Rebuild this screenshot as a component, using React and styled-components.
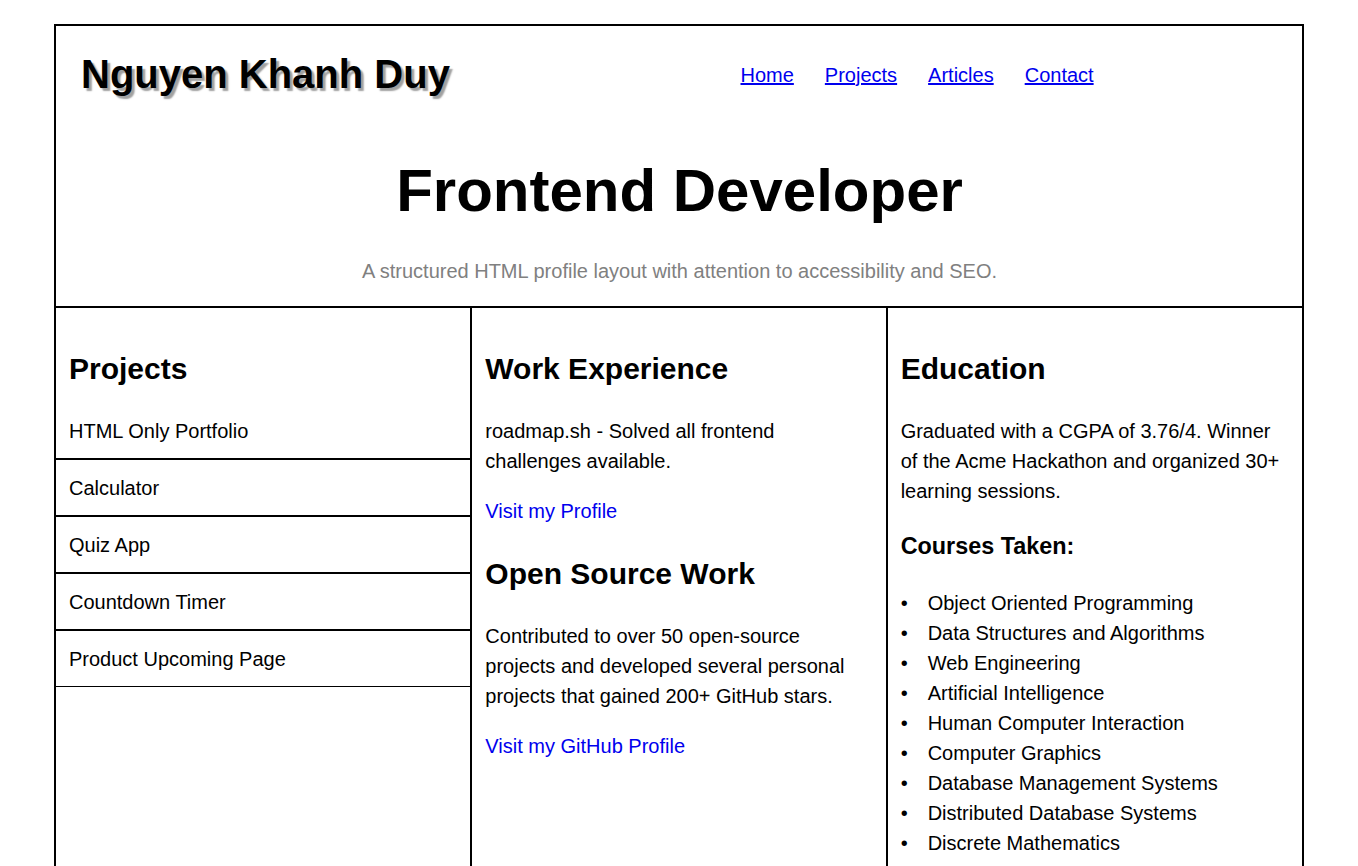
import React from "react";
import styled, { createGlobalStyle } from "styled-components";

const GlobalStyle = createGlobalStyle`
  html, body {
    margin: 0;
    padding: 0;
    background: #ffffff;
  }
  body {
    font-family: "Liberation Sans", Arial, sans-serif;
    font-size: 20px;
    line-height: 1.5;
    color: #000000;
  }
  *, *::before, *::after { box-sizing: border-box; }
`;

const Page = styled.div`
  width: 1250px;
  margin: 24px auto 0;
  border: 2px solid #000;
`;

const Header = styled.header`
  border-bottom: 2px solid #000;
  padding: 20px 24px 20px 25px;
`;

const TopRow = styled.div`
  display: grid;
  grid-template-columns: 1fr 1fr;
  align-items: center;
`;

const Name = styled.h1`
  margin: 0;
  font-size: 40px;
  line-height: 57px;
  font-weight: 700;
  text-shadow: 3px 3px 1.5px #a0a0a0;
`;

const NavList = styled.ul`
  display: flex;
  gap: 31px;
  list-style: none;
  margin: 0;
  padding: 0 0 0 61px;
`;

const NavLink = styled.a`
  color: #0000ee;
  text-decoration: underline;
  font-size: 20px;
`;

const Hero = styled.h1`
  margin: 43px 0 20px;
  text-align: center;
  font-size: 60px;
  line-height: 90px;
  font-weight: 700;
`;

const Tagline = styled.p`
  margin: 0;
  text-align: center;
  color: #808080;
  font-size: 20px;
  line-height: 30px;
`;

const Columns = styled.main`
  display: grid;
  grid-template-columns: repeat(3, 1fr);
`;

const Column = styled.section`
  border-right: 1px solid #000;
  padding: 13px 0 13px;
  & + & { border-left: 1px solid #000; }
  &:last-child { border-right: none; }
`;

const SectionTitle = styled.h2`
  margin: 25px 0;
  padding: 0 13px;
  font-size: 30px;
  line-height: 45px;
  font-weight: 700;
`;

const SubTitle = styled.h3`
  margin: 23.4px 0;
  padding: 0 13px;
  font-size: 23.4px;
  line-height: 35.1px;
  font-weight: 700;
`;

const Text = styled.p`
  margin: 20px 0;
  padding: 0 13px;
  line-height: 30px;
`;

const TextLink = styled.a`
  color: #0000ee;
  text-decoration: none;
`;

const ProjectList = styled.ul`
  list-style: none;
  margin: -13px 0 0;
  padding: 0;
`;

const ProjectItem = styled.li`
  padding: 13px 13px 12px;
  line-height: 30px;
  border-bottom: 1px solid #000;
  & + & { border-top: 1px solid #000; }
`;

const CourseList = styled.ul`
  list-style: none;
  margin: 20px 0;
  padding: 0 13px 0 40px;
  line-height: 30px;
`;

const Course = styled.li`
  &::before {
    content: "•";
    display: inline-block;
    width: 27px;
    margin-left: -27px;
  }
`;

const navItems = ["Home", "Projects", "Articles", "Contact"];
const projects = [
  "HTML Only Portfolio",
  "Calculator",
  "Quiz App",
  "Countdown Timer",
  "Product Upcoming Page",
];
const courses = [
  "Object Oriented Programming",
  "Data Structures and Algorithms",
  "Web Engineering",
  "Artificial Intelligence",
  "Human Computer Interaction",
  "Computer Graphics",
  "Database Management Systems",
  "Distributed Database Systems",
  "Discrete Mathematics",
];

export default function App() {
  return (
    <>
      <GlobalStyle />
      <Page>
        <Header>
          <TopRow>
            <Name>Nguyen Khanh Duy</Name>
            <nav>
              <NavList>
                {navItems.map((n) => (
                  <li key={n}>
                    <NavLink href="#">{n}</NavLink>
                  </li>
                ))}
              </NavList>
            </nav>
          </TopRow>
          <Hero>Frontend Developer</Hero>
          <Tagline>
            A structured HTML profile layout with attention to accessibility and SEO.
          </Tagline>
        </Header>
        <Columns>
          <Column>
            <SectionTitle>Projects</SectionTitle>
            <ProjectList>
              {projects.map((p) => (
                <ProjectItem key={p}>{p}</ProjectItem>
              ))}
            </ProjectList>
          </Column>
          <Column>
            <SectionTitle>Work Experience</SectionTitle>
            <Text>roadmap.sh - Solved all frontend challenges available.</Text>
            <Text>
              <TextLink href="#">Visit my Profile</TextLink>
            </Text>
            <SectionTitle>Open Source Work</SectionTitle>
            <Text>
              Contributed to over 50 open-source projects and developed several
              personal projects that gained 200+ GitHub stars.
            </Text>
            <Text>
              <TextLink href="#">Visit my GitHub Profile</TextLink>
            </Text>
          </Column>
          <Column>
            <SectionTitle>Education</SectionTitle>
            <Text>
              Graduated with a CGPA of 3.76/4. Winner of the Acme Hackathon and
              organized 30+ learning sessions.
            </Text>
            <SubTitle>Courses Taken:</SubTitle>
            <CourseList>
              {courses.map((c) => (
                <Course key={c}>{c}</Course>
              ))}
            </CourseList>
          </Column>
        </Columns>
      </Page>
    </>
  );
}
